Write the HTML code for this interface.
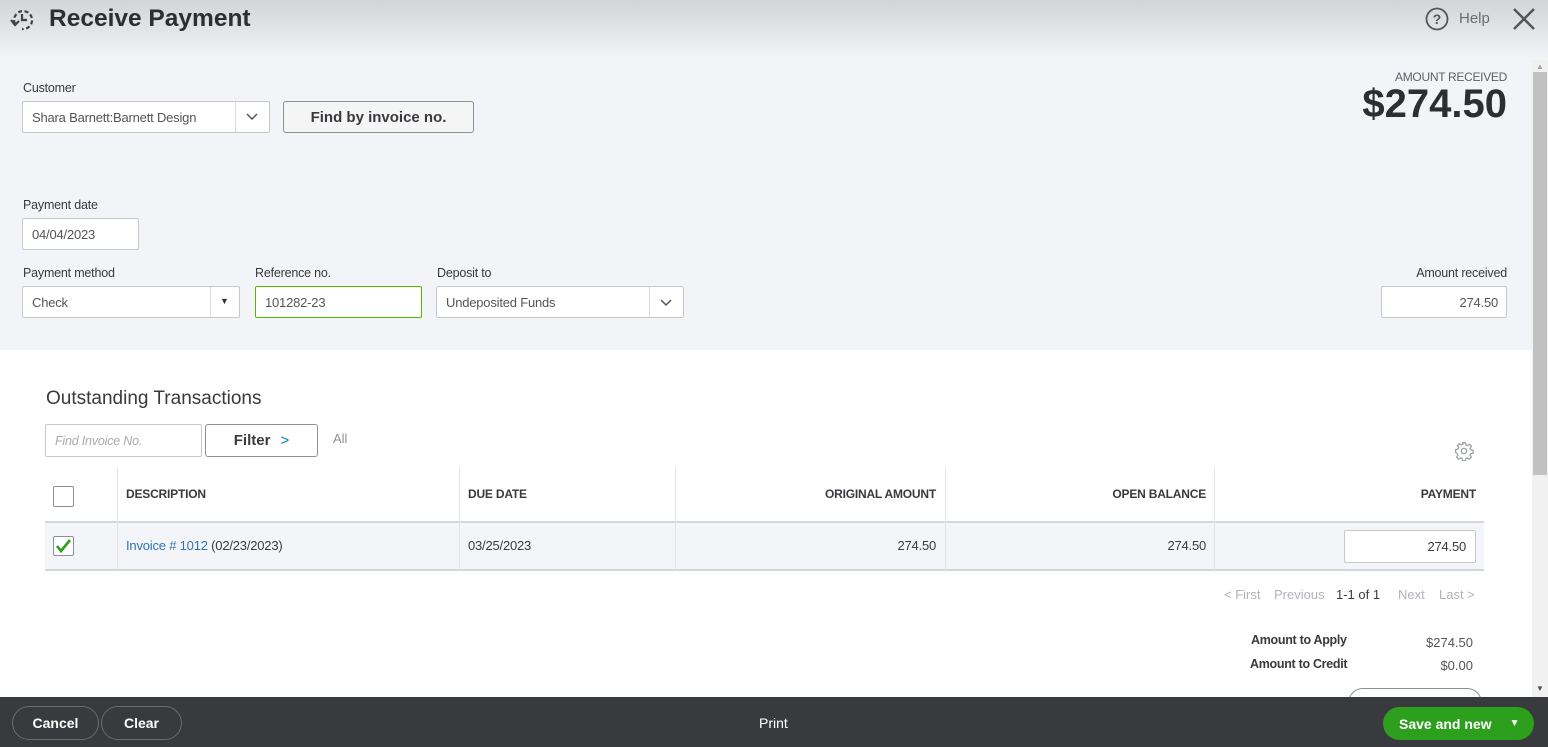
<!DOCTYPE html>
<html><head><meta charset="utf-8"><style>
*{box-sizing:border-box;margin:0;padding:0}
body{width:1548px;height:747px;overflow:hidden;position:relative;font-family:"Liberation Sans",sans-serif;color:#393a3d;background:#fff}
.a{position:absolute}
.hdr{left:0;top:0;width:1548px;height:60px;background:linear-gradient(#d3d4d6,#f3f4f7)}
.form{left:0;top:60px;width:1532px;height:290px;background:#f3f4f8}
.lbl{font-size:12.5px;color:#393a3d;letter-spacing:-.2px}
.inp{background:#fff;border:1px solid #c6c8cc;border-radius:2px;font-size:13px;color:#555;padding-left:9px;display:flex;align-items:center;letter-spacing:-.2px}
.th{font-size:12px;font-weight:bold;color:#393a3d;top:487px;letter-spacing:-.2px}
.vl{width:1px;background:#e3e4e6}
.td{font-size:13px;top:538px;color:#393a3d;letter-spacing:-.2px}
.gray{color:#b0b3b8;font-size:13px;top:587px}
.fbtn{border:1px solid #6b6c70;border-radius:20px;color:#fff;font-weight:bold;font-size:14px;display:flex;align-items:center;justify-content:center;height:34px;top:706px}
</style></head><body>
<div class="a hdr"></div>
<div class="a form"></div>
<svg class="a" style="left:9px;top:6px" width="28" height="28" viewBox="0 0 28 28" fill="none" stroke="#404145" stroke-width="2.2"><path d="M6 18 A9 9 0 1 1 13 23" stroke-dasharray="4 2.5"/><path d="M13 8v6h5"/><path d="M2 14l4 5 4-4"/></svg>
<div class="a" style="left:49px;top:5px;font-size:24.5px;font-weight:bold;color:#2d2e31">Receive Payment</div>
<svg class="a" style="left:1425px;top:7px" width="24" height="24" viewBox="0 0 24 24"><circle cx="12" cy="12" r="10.5" fill="none" stroke="#555" stroke-width="1.8"/><text x="12" y="17" text-anchor="middle" font-size="14" font-weight="bold" fill="#555" font-family="Liberation Sans">?</text></svg>
<div class="a" style="left:1459px;top:10px;font-size:15px;color:#6b6c72">Help</div>
<svg class="a" style="left:1512px;top:7px" width="24" height="24" viewBox="0 0 24 24" stroke="#555" stroke-width="2.4"><path d="M2 2L22 22M22 2L2 22"/></svg>

<div class="a lbl" style="left:23px;top:81px">Customer</div>
<div class="a inp" style="left:22px;top:101px;width:248px;height:32px">Shara Barnett:Barnett Design</div>
<div class="a" style="left:235px;top:102px;width:1px;height:30px;background:#ddd"></div>
<svg class="a" style="left:246px;top:113px" width="12" height="8" viewBox="0 0 12 8"><path d="M1 1l5 5 5-5" fill="none" stroke="#555" stroke-width="1.5"/></svg>
<div class="a" style="left:283px;top:101px;width:191px;height:32px;border:1px solid #8d9096;border-radius:3px;background:#f5f5f6;font-size:15px;font-weight:bold;color:#393a3d;display:flex;align-items:center;justify-content:center">Find by invoice no.</div>

<div class="a" style="right:41px;top:70px;font-size:12px;color:#5f6166;letter-spacing:-.3px">AMOUNT RECEIVED</div>
<div class="a" style="right:41px;top:82px;font-size:40px;font-weight:bold;color:#2d2e31">$274.50</div>

<div class="a lbl" style="left:23px;top:198px">Payment date</div>
<div class="a inp" style="left:22px;top:218px;width:117px;height:32px">04/04/2023</div>
<div class="a lbl" style="left:23px;top:266px">Payment method</div>
<div class="a inp" style="left:22px;top:286px;width:218px;height:32px">Check</div>
<div class="a" style="left:210px;top:287px;width:1px;height:30px;background:#ddd"></div>
<div class="a" style="left:220px;top:296px;font-size:9px;color:#333">▼</div>
<div class="a lbl" style="left:255px;top:266px">Reference no.</div>
<div class="a inp" style="left:255px;top:286px;width:167px;height:32px;border-color:#53b700">101282-23</div>
<div class="a lbl" style="left:437px;top:266px">Deposit to</div>
<div class="a inp" style="left:436px;top:286px;width:248px;height:32px">Undeposited Funds</div>
<div class="a" style="left:649px;top:287px;width:1px;height:30px;background:#ddd"></div>
<svg class="a" style="left:660px;top:299px" width="12" height="8" viewBox="0 0 12 8"><path d="M1 1l5 5 5-5" fill="none" stroke="#555" stroke-width="1.5"/></svg>
<div class="a lbl" style="right:41px;top:266px">Amount received</div>
<div class="a inp" style="left:1381px;top:286px;width:126px;height:32px;justify-content:flex-end;padding-right:8px">274.50</div>

<div class="a" style="left:46px;top:388px;font-size:19px;color:#393a3d">Outstanding Transactions</div>
<div class="a inp" style="left:45px;top:424px;width:157px;height:33px;font-style:italic;color:#aaa;font-size:12.5px">Find Invoice No.</div>
<div class="a" style="left:205px;top:424px;width:113px;height:33px;border:1px solid #8d9096;border-radius:3px;font-size:15px;font-weight:bold;display:flex;align-items:center;justify-content:center">Filter <span style="color:#0077c5;margin-left:10px;font-weight:normal">&gt;</span></div>
<div class="a" style="left:333px;top:431px;font-size:13px;color:#8d9096">All</div>
<svg class="a" style="left:1454px;top:441px" width="20" height="20" viewBox="0 0 24 24" fill="none" stroke="#a0a3a8" stroke-width="1.6"><circle cx="12" cy="12" r="3.2"/><path d="M10.3 2h3.4l.5 2.7 2 .9 2.3-1.6 2.4 2.4-1.6 2.3.9 2 2.7.5v3.4l-2.7.5-.9 2 1.6 2.3-2.4 2.4-2.3-1.6-2 .9-.5 2.7h-3.4l-.5-2.7-2-.9-2.3 1.6-2.4-2.4 1.6-2.3-.9-2L2 13.7v-3.4l2.7-.5.9-2L4 5.5 6.4 3.1l2.3 1.6 2-.9z"/></svg>

<div class="a" style="left:45px;top:521px;width:1439px;height:50px;background:#f4f5f8;border-top:2px solid #d4d6da;border-bottom:2px solid #d4d6da"></div>
<div class="a vl" style="left:117px;top:468px;height:103px"></div>
<div class="a vl" style="left:459px;top:468px;height:103px"></div>
<div class="a vl" style="left:675px;top:468px;height:103px"></div>
<div class="a vl" style="left:945px;top:468px;height:103px"></div>
<div class="a vl" style="left:1214px;top:468px;height:103px"></div>
<div class="a" style="left:53px;top:486px;width:21px;height:21px;border:1px solid #8d9096;border-radius:2px;background:#fff"></div>
<div class="a th" style="left:126px">DESCRIPTION</div>
<div class="a th" style="left:468px">DUE DATE</div>
<div class="a th" style="right:612px">ORIGINAL AMOUNT</div>
<div class="a th" style="right:342px">OPEN BALANCE</div>
<div class="a th" style="right:72px">PAYMENT</div>
<div class="a" style="left:53px;top:536px;width:21px;height:20px;border:1px solid #8d9096;border-radius:2px;background:#fff"></div>
<svg class="a" style="left:55px;top:538px" width="17" height="16" viewBox="0 0 17 16"><path d="M2 8l4 5 9-11" fill="none" stroke="#2ca01c" stroke-width="2.6"/></svg>
<div class="a td" style="left:126px"><span style="color:#2f74b5">Invoice # 1012</span> (02/23/2023)</div>
<div class="a td" style="left:468px">03/25/2023</div>
<div class="a td" style="right:612px">274.50</div>
<div class="a td" style="right:342px">274.50</div>
<div class="a inp" style="left:1344px;top:530px;width:132px;height:33px;justify-content:flex-end;padding-right:9px;color:#393a3d">274.50</div>

<div class="a gray" style="left:1224px">&lt; First</div>
<div class="a gray" style="left:1274px">Previous</div>
<div class="a" style="left:1336px;top:587px;font-size:13px;color:#393a3d">1-1 of 1</div>
<div class="a gray" style="left:1398px">Next</div>
<div class="a gray" style="left:1439px">Last &gt;</div>
<div class="a" style="left:1251px;top:633px;font-size:12.5px;font-weight:bold;color:#393a3d;letter-spacing:-.3px">Amount to Apply</div>
<div class="a" style="right:75px;top:635px;font-size:13px;color:#555">$274.50</div>
<div class="a" style="left:1250px;top:657px;font-size:12.5px;font-weight:bold;color:#393a3d;letter-spacing:-.3px">Amount to Credit</div>
<div class="a" style="right:75px;top:658px;font-size:13px;color:#555">$0.00</div>
<div class="a" style="left:1348px;top:688px;width:134px;height:30px;border:1px solid #8d9096;border-radius:16px"></div>

<div class="a" style="left:1532px;top:60px;width:16px;height:637px;background:#f1f1f1"></div>
<div class="a" style="left:1533px;top:72px;width:14px;height:403px;background:#c1c1c1"></div>
<div class="a" style="left:1536px;top:62px;font-size:8px;color:#a3a3a3">▲</div>
<div class="a" style="left:1536px;top:684px;font-size:8px;color:#505050">▼</div>

<div class="a" style="left:0;top:697px;width:1548px;height:50px;background:#393a3d"></div>
<div class="a fbtn" style="left:12px;width:87px">Cancel</div>
<div class="a fbtn" style="left:101px;width:81px">Clear</div>
<div class="a" style="left:759px;top:715px;font-size:14px;color:#fff">Print</div>
<div class="a" style="left:1383px;top:707px;width:151px;height:33px;background:#2ca01c;border-radius:17px;color:#fff;font-weight:bold;font-size:14px;display:flex;align-items:center;padding-left:16px">Save and new<span style="margin-left:18px;font-size:10px">▼</span></div>
</body></html>
